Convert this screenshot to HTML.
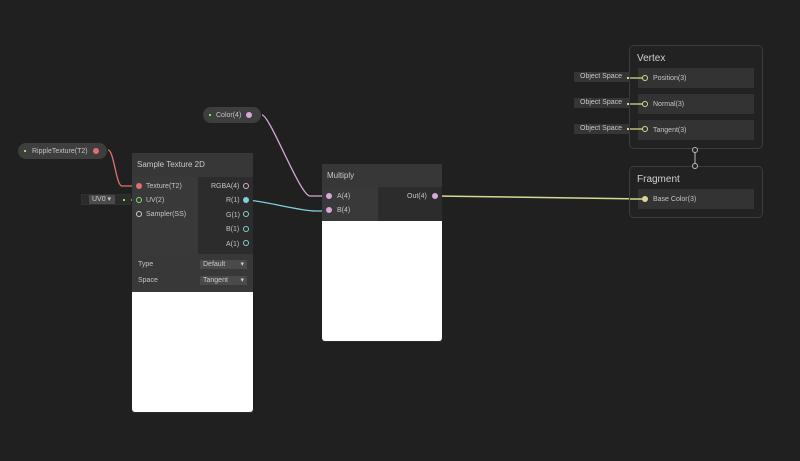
<!DOCTYPE html><html><head><style>
body{margin:0;width:800px;height:461px;background:#202020;overflow:hidden;position:relative;font-family:"Liberation Sans",sans-serif;font-size:7px;color:#c4c4c4}
div{position:absolute;box-sizing:border-box}
.hd{background:#373737;color:#c8c8c8;font-size:8px;padding-left:5px;line-height:23px}
.pill{background:#3e3e3e;border-radius:8px;height:16px;line-height:16px}
.dot{width:2px;height:2px;background:#84e06a}
.port{width:6px;height:6px;border-radius:50%;border:1px solid #ccc}
.lbl{white-space:nowrap;line-height:9px}
.field{background:#2b2b2b;border:1px solid #303030}
.dd{background:#4a4a4a;color:#ccc;height:9px;line-height:9px;padding-left:3px}
.blk{border:1px solid #3c3c3c;border-radius:5px;background:#222}
.slot{background:#333;height:20px;line-height:21px;padding-left:15px}
.os{background:#353535;color:#c8c8c8;height:10px;line-height:10px;padding-left:6px}
</style></head><body>
<svg width="800" height="461" style="position:absolute;left:0;top:0">
<path d="M108 150 C114 150,116 186,122 186 L138 186" stroke="#e07070" stroke-width="1.3" fill="none"/>
<path d="M262 115 C270 115,300 196,310 196 L328 196" stroke="#d8a8d8" stroke-width="1.3" fill="none"/>
<path d="M246 200 C260 200,300 211,315 211 L328 211" stroke="#7fd0d8" stroke-width="1.3" fill="none"/>
<path d="M435 196 L645 199" stroke="#d8d890" stroke-width="1.5" fill="none"/>
<path d="M124 200 L138 200" stroke="#84e06a" stroke-width="1.3"/>
</svg>

<div class="pill" style="left:18px;top:143px;width:89px"><div class="dot" style="left:6px;top:7px"></div><span style="position:absolute;left:14px;top:1px">RippleTexture(T2)</span><div class="port" style="left:75px;top:5px;border-color:#e07070;background:#e07070"></div></div>
<div class="pill" style="left:203px;top:107px;width:58px"><div class="dot" style="left:6px;top:7px"></div><span style="position:absolute;left:13px;top:1px">Color(4)</span><div class="port" style="left:43px;top:5px;border-color:#d8a8d8;background:#d8a8d8"></div></div>

<div class="field" style="left:81px;top:194px;width:50px;height:11px"><div class="dd" style="left:7px;top:0;width:26px;background:#4a4a4a">UV0 ▾</div><div class="dot" style="left:41px;top:4px"></div></div>

<div style="left:132px;top:153px;width:121px;height:260px;background:#2c2c2c">
<div class="hd" style="left:0;top:0;width:121px;height:24px">Sample Texture 2D</div>
<div style="left:0;top:24px;width:66px;height:77px;background:#393939"></div>
<div class="port" style="left:4px;top:30px;border-color:#e07070;background:#e07070"></div><div class="lbl" style="left:14px;top:29px">Texture(T2)</div>
<div class="port" style="left:4px;top:44px;border-color:#84e06a"></div><div class="lbl" style="left:14px;top:43px">UV(2)</div>
<div class="port" style="left:4px;top:58px"></div><div class="lbl" style="left:14px;top:57px">Sampler(SS)</div>
<div class="lbl" style="left:79px;top:29px">RGBA(4)</div><div class="port" style="left:111px;top:30px;border-color:#d8a8d8"></div>
<div class="lbl" style="left:94px;top:43px">R(1)</div><div class="port" style="left:111px;top:44px;border-color:#7fd0d8;background:#7fd0d8"></div>
<div class="lbl" style="left:94px;top:58px">G(1)</div><div class="port" style="left:111px;top:58px;border-color:#7fd0d8"></div>
<div class="lbl" style="left:94px;top:72px">B(1)</div><div class="port" style="left:111px;top:73px;border-color:#7fd0d8"></div>
<div class="lbl" style="left:94px;top:87px">A(1)</div><div class="port" style="left:111px;top:87px;border-color:#7fd0d8"></div>
<div style="left:0;top:101px;width:121px;height:38px;background:#383838"></div>
<div class="lbl" style="left:6px;top:107px">Type</div><div class="dd" style="left:68px;top:107px;width:47px">Default<span style="position:absolute;right:3px">▾</span></div>
<div class="lbl" style="left:6px;top:123px">Space</div><div class="dd" style="left:68px;top:123px;width:47px">Tangent<span style="position:absolute;right:3px">▾</span></div>
<div style="left:0;top:139px;width:121px;height:120px;background:#fff;border-radius:0 0 3px 3px"></div>
</div>

<div style="left:322px;top:164px;width:120px;height:178px;background:#2c2c2c">
<div class="hd" style="left:0;top:0;width:120px;height:23px">Multiply</div>
<div style="left:0;top:23px;width:56px;height:34px;background:#393939"></div>
<div class="port" style="left:4px;top:29px;border-color:#d8a8d8;background:#d8a8d8"></div><div class="lbl" style="left:15px;top:28px">A(4)</div>
<div class="port" style="left:4px;top:43px;border-color:#d8a8d8;background:#d8a8d8"></div><div class="lbl" style="left:15px;top:42px">B(4)</div>
<div class="lbl" style="left:85px;top:28px">Out(4)</div><div class="port" style="left:110px;top:29px;border-color:#d8a8d8;background:#d8a8d8"></div>
<div style="left:0;top:57px;width:120px;height:120px;background:#fff;border-radius:0 0 3px 3px"></div>
</div>

<div class="blk" style="left:629px;top:45px;width:134px;height:104px">
<div class="lbl" style="left:7px;top:7px;font-size:10px;line-height:12px;color:#d0d0d0">Vertex</div>
<div class="slot" style="left:8px;top:22px;width:116px">Position(3)</div>
<div class="slot" style="left:8px;top:48px;width:116px">Normal(3)</div>
<div class="slot" style="left:8px;top:74px;width:116px">Tangent(3)</div>
</div>
<div class="os" style="left:574px;top:72px;width:56px">Object Space</div>
<div class="os" style="left:574px;top:98px;width:56px">Object Space</div>
<div class="os" style="left:574px;top:124px;width:56px">Object Space</div>

<div class="blk" style="left:629px;top:166px;width:134px;height:52px">
<div class="lbl" style="left:7px;top:7px;font-size:10px;line-height:12px;color:#d0d0d0">Fragment</div>
<div class="slot" style="left:8px;top:22px;width:116px;padding-left:15px">Base Color(3)</div>
</div>

<svg width="800" height="461" style="position:absolute;left:0;top:0">
<path d="M630 78 L643 78 M630 104 L643 104 M630 129 L643 129" stroke="#d8d890" stroke-width="1.3"/>
<g fill="#d8d890"><rect x="627" y="77" width="2" height="2"/><rect x="627" y="103" width="2" height="2"/><rect x="627" y="128" width="2" height="2"/></g>
<g fill="#333" stroke="#d8d890"><circle cx="645" cy="78" r="2.5"/><circle cx="645" cy="104" r="2.5"/><circle cx="645" cy="129" r="2.5"/></g>
<path d="M630 199 L643 199" stroke="#d8d890" stroke-width="1.5"/>
<circle cx="645" cy="199" r="3" fill="#d8d890"/>
<path d="M695 152 L695 164" stroke="#bbb" stroke-width="1"/>
<circle cx="695" cy="150" r="2.5" fill="#222" stroke="#bbb"/><circle cx="695" cy="166" r="2.5" fill="#222" stroke="#bbb"/>
</svg>
</body></html>
